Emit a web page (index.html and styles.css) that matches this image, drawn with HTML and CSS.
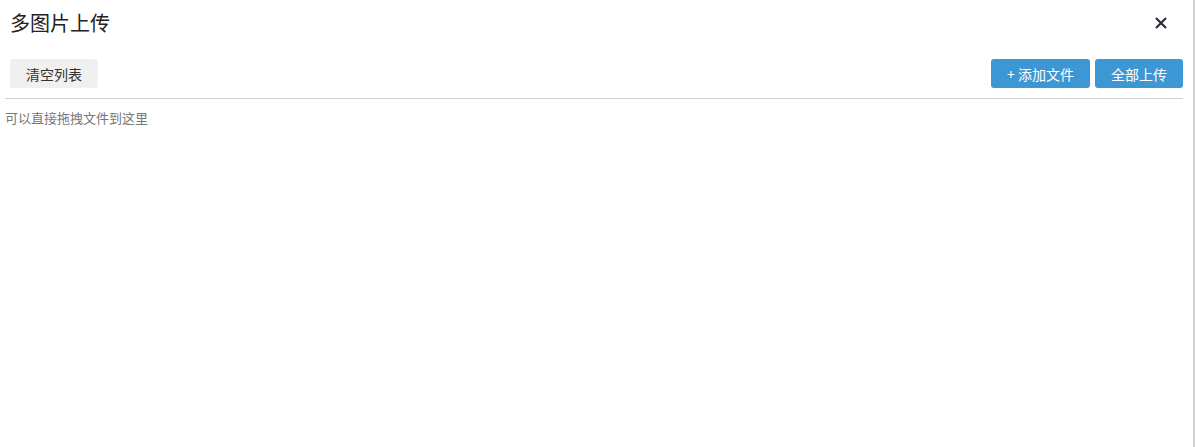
FILE: index.html
```html
<!DOCTYPE html>
<html>
	<head>
		<meta charset="utf-8">
		<title>多图片上传</title>
		<link rel="stylesheet" href="styles.css">
	</head>
	<body>
		<div class="dialog">
			<div class="head">
				<h3 class="title">多图片上传</h3>
				<span class="close">
					<svg width="12" height="12" viewBox="0 0 12 12"><path d="M1 1L11 11M11 1L1 11" stroke="#2b2f36" stroke-width="2.2" fill="none"/></svg>
				</span>
			</div>
			<div class="toolbar">
				<button class="btn">清空列表</button>
				<div class="right">
					<button class="btn blue">+ 添加文件</button>
					<button class="btn blue">全部上传</button>
				</div>
			</div>
			<div class="drop">可以直接拖拽文件到这里</div>
		</div>
	</body>
</html>
```

FILE: styles.css
```css
* {box-sizing: border-box}
html, body {margin: 0; height: 100%; background: #fff;}
body {
	font-family: "Microsoft YaHei", "Noto Sans CJK SC", sans-serif;
	color: #333;
}
.dialog {
	height: 100%;
	border-right: 2px solid #d2d2d2;
	padding: 0 10px 0 5px;
}
.head {
	display: flex;
	align-items: center;
	justify-content: space-between;
	height: 59px;
	padding: 0 16px 14px 5px;
}
.title {
	margin: 0;
	font-size: 20px;
	font-weight: normal;
	line-height: 30px;
	color: #222;
}
.close {
	display: flex;
	padding-top: 1px;
}
.toolbar {
	display: flex;
	justify-content: space-between;
	padding: 0 0 10px 5px;
	border-bottom: 1px solid #cfcfcf;
}
.right {
	display: flex;
	gap: 5px;
}
.btn {
	height: 29px;
	padding: 0 16px;
	border: none;
	border-radius: 3px;
	background: #f0f0f0;
	color: #333;
	font-family: inherit;
	font-size: 14px;
}
.blue {
	background: #3e97d5;
	color: #fff;
}
.drop {
	margin-top: 9px;
	font-size: 13px;
	line-height: 20px;
	color: #777;
}
```
